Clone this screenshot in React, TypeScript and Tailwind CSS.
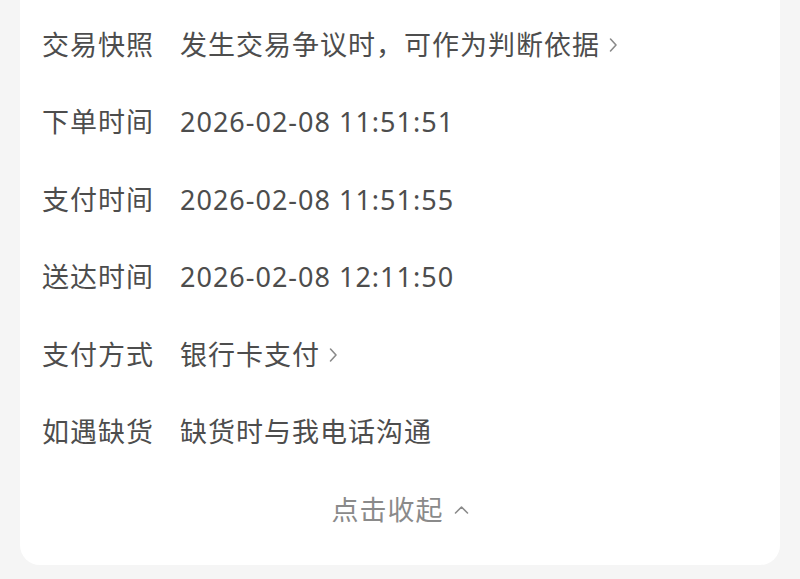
import React from 'react';

type Row = { label: string; value: string; link?: boolean };

const rows: Row[] = [
  { label: '交易快照', value: '发生交易争议时，可作为判断依据', link: true },
  { label: '下单时间', value: '2026-02-08 11:51:51' },
  { label: '支付时间', value: '2026-02-08 11:51:55' },
  { label: '送达时间', value: '2026-02-08 12:11:50' },
  { label: '支付方式', value: '银行卡支付', link: true },
  { label: '如遇缺货', value: '缺货时与我电话沟通' },
];

const ChevronRight = () => (
  <svg className="ml-[8px] h-[16px] w-[10px]" viewBox="0 0 10 16" fill="none">
    <path d="M2.5 2 8 8l-5.5 6" stroke="#8a8a8a" strokeWidth="1.6" strokeLinecap="round" strokeLinejoin="round" />
  </svg>
);

const ChevronUp = () => (
  <svg className="ml-[10px] h-[10px] w-[15px]" viewBox="0 0 15 10" fill="none">
    <path d="M1.5 8 7.5 2l6 6" stroke="#8a8a8a" strokeWidth="1.6" strokeLinecap="round" strokeLinejoin="round" />
  </svg>
);

export default function App() {
  return (
    <div
      className="min-h-[579px] w-full bg-[#f5f5f5] px-[20px]"
      style={{ fontFamily: '"Noto Sans", "Noto Sans CJK SC", sans-serif' }}
    >
      <div className="rounded-b-[20px] bg-white pt-[6px] pb-[16px]">
        {rows.map((row) => (
          <div key={row.label} className="flex h-[77.5px] items-center pl-[22px] text-[27px] tracking-[1px] text-[#4d4d4d]">
            <span className="w-[138px] shrink-0">{row.label}</span>
            <span className="flex items-center">
              {row.value}
              {row.link && <ChevronRight />}
            </span>
          </div>
        ))}
        <div className="flex h-[77.5px] items-center justify-center text-[27px] tracking-[1px] text-[#8a8a8a]">
          <span>点击收起</span>
          <ChevronUp />
        </div>
      </div>
    </div>
  );
}
